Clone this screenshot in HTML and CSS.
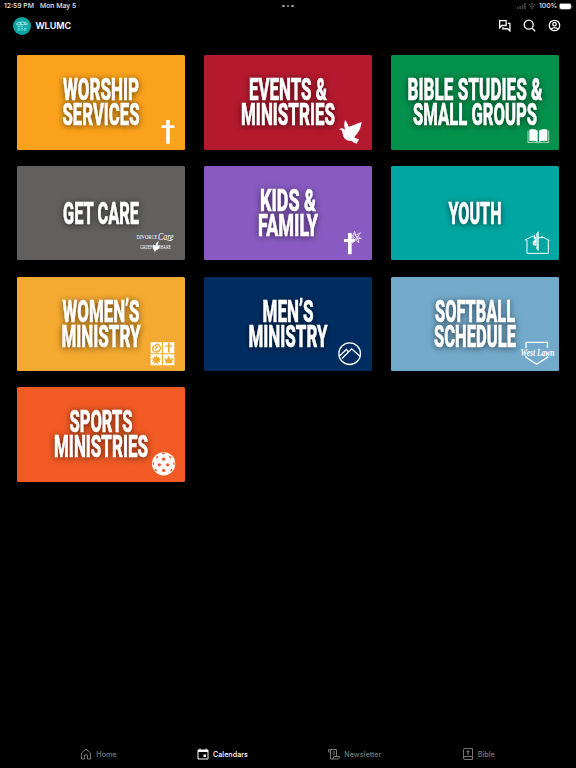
FILE: index.html
```html
<!DOCTYPE html>
<html lang="en">
<head>
<meta charset="utf-8">
<title>WLUMC</title>
<link rel="stylesheet" href="styles.css">
</head>
<body>
<div class="status">
  <span class="time">12:59 PM</span><span class="date">Mon May 5</span>
  <span class="dots"><i></i><i></i><i></i></span>
  <svg class="signal" width="9" height="6" viewBox="0 0 9 6"><path d="M0 4h1.6v2H0zM2.4 3H4v3H2.4zM4.8 1.6h1.6V6H4.800zM7.200 0h1.600v6H7.200z"/></svg>
  <svg class="wifi" width="8" height="6" viewBox="0 0 8 6"><path d="M.5 2.300q3.500-3 7 0M1.800 3.800q2.200-1.900 4.400 0"/><circle cx="4" cy="5.100" r=".5"/></svg>
  <span class="percent">100%</span>
  <svg class="battery" width="14" height="7" viewBox="0 0 14 7"><rect x=".3" y=".3" width="12" height="6.200" rx="1.800" class="case"/><rect x=".7" y=".8" width="11.200" height="5.200" rx="1.400"/><path d="M12.900 2.400q.8 1 0 2z"/></svg>
</div>
<header class="header">
  <svg class="avatar" width="18" height="18" viewBox="0 0 54 54"><circle cx="27" cy="27" r="27" fill="#08a5a2"/><path d="M10 20q8-5 17-5t17 5M10 23h34M20 18l6 3M34 16l3 6M24 26l6 4M14 28h8" fill="none" stroke="#e5ffff" stroke-width="2"/><path d="M14 34h6M23 34h6M33 34h8M13 39h9M25 39h5M32 39h8" stroke="#bff" stroke-width="2"/></svg>
  <h1>WLUMC</h1>
  <svg class="tool" width="13" height="13" viewBox="0 0 24 24"><path d="M3 3h12v9H7l-4 4zM18 8h4v14l-4-4H9v-3"/></svg>
  <svg class="tool" width="13" height="13" viewBox="0 0 24 24"><circle cx="10.500" cy="10.500" r="8.300"/><path d="m17 17 5.500 5.500"/></svg>
  <svg class="tool" width="13" height="13" viewBox="0 0 24 24"><circle cx="12" cy="12" r="9.600"/><circle cx="12" cy="9.500" r="3.200"/><path d="M5.500 18.500q6.500-5 13 0"/></svg>
</header>
<main class="grid">
  <svg class="card worship" viewBox="0 0 168 94.500">
    <g class="title"><text x="84" y="45.300" textLength="76" lengthAdjust="spacingAndGlyphs">WORSHIP</text><text x="84" y="69.700" textLength="77" lengthAdjust="spacingAndGlyphs">SERVICES</text></g>
    <path class="fill" d="M149.200 65h3.600v5.200h4.700v2.900h-4.700v15.600h-3.600V73.100h-4.700v-2.900h4.700z"/>
  </svg>
  <svg class="card events" viewBox="0 0 168 94.500">
    <g class="title"><text x="84" y="45.300" textLength="78" lengthAdjust="spacingAndGlyphs">EVENTS &amp;</text><text x="84" y="69.700" textLength="94" lengthAdjust="spacingAndGlyphs">MINISTRIES</text></g>
    <path class="fill" transform="scale(.33333) translate(-24 -16)" d="M428 240q5-6 12-4l7 5q-5-15 0-31 8 9 11 21 14-4 39-14-3 23-14 35-7 7-8 12l14 5-7 13q-8-2-15-8-18 0-24-12-3-8-5-19-4-4-10-3z"/>
  </svg>
  <svg class="card studies" viewBox="0 0 168 94.500">
    <g class="title"><text x="84" y="45.300" textLength="135" lengthAdjust="spacingAndGlyphs">BIBLE STUDIES &amp;</text><text x="84" y="69.700" textLength="124" lengthAdjust="spacingAndGlyphs">SMALL GROUPS</text></g>
    <g transform="scale(.33333) translate(-22 -16)"><path class="fill" d="M437 240q14-5 25 3v34q-11-6-25-3zM466 243q11-8 25-3v34q-14-3-25 3z"/><path class="line" stroke-width="2" d="M433 243v36q18-3 31 0 13-3 31 0v-36"/></g>
  </svg>
  <svg class="card care" viewBox="0 0 168 94.500">
    <g class="title"><text x="84" y="57.600" textLength="76" lengthAdjust="spacingAndGlyphs">GET CARE</text></g>
    <g class="serif"><text x="119.500" y="72.600" font-size="5.500" textLength="21" lengthAdjust="spacingAndGlyphs">DIVORCE</text><text class="script" x="141" y="73.500" font-size="10.500" textLength="15.500" lengthAdjust="spacingAndGlyphs">Care</text><text x="123" y="82.500" font-size="5.500" textLength="12.500" lengthAdjust="spacingAndGlyphs">GRIEF</text><text x="141" y="82.500" font-size="5.500" textLength="13" lengthAdjust="spacingAndGlyphs">SHARE</text></g>
    <path class="fill" d="M136 79q2-1 2 2 1-5 4-6-2 3-1 5l2-1q-1 5-4 5l-1 2-1-2q-2-1-1-5zM149 74.500l7.500-1-3 1.500z"/>
  </svg>
  <svg class="card kids" viewBox="0 0 168 94.500">
    <g class="title"><text x="84" y="45" textLength="56" lengthAdjust="spacingAndGlyphs">KIDS &amp;</text><text x="84" y="69.500" textLength="60" lengthAdjust="spacingAndGlyphs">FAMILY</text></g>
    <g transform="scale(.33333) translate(-24 -18)"><path class="fill" d="M456 219h11v18h10v9h-10v37h-11v-37h-12v-9h12z"/><path class="line" stroke-width="2" d="m462 224 10 3 4-14 3 13 15-8-9 12 11 6-11-1 4 14-10-9-10 9 5-13-9-5 9-1 7 9 5-12M472 219l8 8 8 15"/></g>
  </svg>
  <svg class="card youth" viewBox="0 0 168 94.500">
    <g class="title"><text x="84" y="57.600" textLength="53" lengthAdjust="spacingAndGlyphs">YOUTH</text></g>
    <g transform="scale(.33333) translate(-22 -18)"><path class="line" stroke-width="3" d="m424 240 24-12m24 1 25 12M430 240v40h64v-40M461 228v37M453 233h25"/><path class="fill" d="M465 214v59q-11-6-5-17-14 3-13-8 0-6 8-9-7-3-6-10l5-7q-3 8 4 9-3-9 7-17z"/><path stroke="#00a6a1" stroke-width="1.500" fill="none" d="M461 226q-4 6-1 13v20M450 250q5 3 9-1"/></g>
  </svg>
  <svg class="card women" viewBox="0 0 168 94.500">
    <g class="title"><text x="84" y="45.300" textLength="77" lengthAdjust="spacingAndGlyphs">WOMEN’S</text><text x="84" y="69.700" textLength="79" lengthAdjust="spacingAndGlyphs">MINISTRY</text></g>
    <g transform="scale(.33333) translate(-20 -20.500)"><path class="fill" d="M421 216h34v33h-34zM458 216h34v33h-34zM421 252h34v33h-34zM458 252h34v33h-34z"/><g fill="#f4a930"><path d="M473 218h5v8h8v4h-8v17h-5v-17h-8v-4h8zM462 261l7 8 6-12 6 12 8-8-4 18h-19zM438 255l3 7 6-4-1 7 7 1-6 4 4 6-7-1-1 7-5-5-6 5v-7l-7 1 4-6-6-4 7-1-1-7 6 4z"/></g><path fill="none" stroke="#f4a930" stroke-width="4" d="M431 226q-9 12 0 18 13 5 19-7 1-11-8-15-8 1-7 6l6 3-8 7"/></g>
  </svg>
  <svg class="card men" viewBox="0 0 168 94.500">
    <g class="title"><text x="84" y="45.300" textLength="51" lengthAdjust="spacingAndGlyphs">MEN’S</text><text x="84" y="69.700" textLength="79" lengthAdjust="spacingAndGlyphs">MINISTRY</text></g>
    <g transform="scale(.33333) translate(-24 -20.500)" class="line"><circle cx="461" cy="250.500" r="32.500" stroke-width="4"/><path stroke-width="4" d="m430 258 21-20 8 8M438 265l29-29 25 22"/></g>
  </svg>
  <svg class="card softball" viewBox="0 0 168 94.500">
    <g class="title"><text x="84" y="45.300" textLength="80" lengthAdjust="spacingAndGlyphs">SOFTBALL</text><text x="84" y="69.700" textLength="82" lengthAdjust="spacingAndGlyphs">SCHEDULE</text></g>
    <path class="line" stroke-width="1.300" d="M135 71v-5.700h21.500V71M135 79v1.300l10.700 7 10.800-7V79"/>
    <g class="serif"><text class="script bold" x="129.500" y="78.500" font-size="9.500" textLength="34" lengthAdjust="spacingAndGlyphs">West Lawn</text></g>
  </svg>
  <svg class="card sports" viewBox="0 0 168 94.500">
    <g class="title"><text x="84" y="45.300" textLength="63" lengthAdjust="spacingAndGlyphs">SPORTS</text><text x="84" y="69.700" textLength="94" lengthAdjust="spacingAndGlyphs">MINISTRIES</text></g>
    <g transform="scale(.33333) translate(-20 -22.500)"><circle class="fill" cx="460" cy="253" r="35"/><g fill="#f15a24"><circle cx="460" cy="239" r="5"/><circle cx="447" cy="256" r="5"/><circle cx="472" cy="256" r="5"/><circle cx="460" cy="273" r="5"/><ellipse cx="459" cy="222" rx="5" ry="2"/><ellipse cx="440" cy="233" rx="4.500" ry="2.500" transform="rotate(-45 440 233)"/><ellipse cx="480" cy="233" rx="4.500" ry="2.500" transform="rotate(45 480 233)"/><ellipse cx="429" cy="252" rx="2" ry="5"/><ellipse cx="491" cy="252" rx="2" ry="5"/><ellipse cx="436" cy="272" rx="4.500" ry="2.500" transform="rotate(50 436 272)"/><ellipse cx="483" cy="272" rx="4.500" ry="2.500" transform="rotate(-50 483 272)"/></g></g>
  </svg>
</main>
<nav class="tabs">
  <a class="tab"><svg width="12" height="12" viewBox="0 0 24 24"><path d="M3 10 12 2l9 8v12h-6v-8H9v8H3z"/></svg>Home</a>
  <a class="tab active"><svg width="12" height="12" viewBox="0 0 24 24"><path d="M2 4h20v18H2zM2 7h20M6 1v4M18 1v4"/><path class="fill" stroke="none" d="M2 4h20v4H2zM13 13h5v5h-5z"/></svg>Calendars</a>
  <a class="tab"><svg width="12" height="12" viewBox="0 0 24 24"><path d="M5 8H1V3h16v14M5 3v19h16q2-1 2-5H11v3q0 2-3 2M9 8h5M9 12h5"/></svg>Newsletter</a>
  <a class="tab"><svg width="12" height="12" viewBox="0 0 24 24"><path d="M21 17V1H6Q3 1 3 4v16q0 3 3 3h15M3 20q0-3 3-3h15v6M12 4v10M8.500 7.500h7"/></svg>Bible</a>
</nav>
</body>
</html>
```
FILE: styles.css
```css
* { box-sizing: border-box; }
body {
  margin: 0;
  width: 576px;
  height: 768px;
  display: flex;
  flex-direction: column;
  overflow: hidden;
  background: #000;
  color: #fff;
  font-family: Inter, "Liberation Sans", sans-serif;
}
svg { display: block; flex: none; }
.status {
  height: 12px;
  padding: 0 3px 0 4px;
  display: flex;
  align-items: center;
  font-size: 6.800px;
  font-weight: 500;
  line-height: 12px;
  color: #e8e8e8;
  white-space: nowrap;
}
.time { width: 36px; }
.date { width: 242px; }
.dots { display: flex; gap: 2px; }
.dots i { width: 2.700px; height: 2.700px; border-radius: 50%; background: #999; }
.signal { margin-left: auto; fill: #444; }
.wifi { margin: 0 3px 0 2.500px; fill: #555; stroke: #555; }
.wifi path { fill: none; }
.percent { width: 18.500px; margin-right: 1.500px; }
.battery { fill: #fff; }
.battery .case { fill: none; stroke: #777; stroke-width: .6; }
.header {
  height: 43.300px;
  padding: 4.500px 15px 0 12.700px;
  display: flex;
  align-items: flex-start;
}
.header h1 {
  margin: 0 auto 0 4.700px;
  font-size: 9px;
  line-height: 18px;
  font-weight: 600;
}
.tool {
  margin: 2.500px 0 0 12px;
  fill: none;
  stroke: #fff;
  stroke-width: 2.400;
}
.grid {
  flex: 1;
  padding: 0 16.700px;
  display: grid;
  grid-template-columns: repeat(3, 168px);
  grid-auto-rows: 94.500px;
  column-gap: 19.300px;
  row-gap: 16.200px;
  align-content: start;
}
.card { width: 168px; height: 94.500px; border-radius: 1.500px; }
.worship { background: #faa21b; }
.events { background: #b5192e; }
.studies { background: #04914c; }
.care { background: #62605e; }
.kids { background: #895bc2; }
.youth { background: #00a6a1; }
.women { background: #f4a930; }
.men { background: #002d61; }
.softball { background: #73aacb; }
.sports { background: #f15a24; }
.title {
  font-family: Roboto, "Liberation Sans Narrow", sans-serif;
  font-size: 31.200px;
  font-weight: 800;
  fill: #fff;
  stroke: #fff;
  stroke-width: .6;
  text-anchor: middle;
  filter: drop-shadow(0 1px 3px rgba(0, 0, 0, .6));
}
.fill { fill: #fff; }
.line { fill: none; stroke: #fff; }
.serif { font-family: "Liberation Serif", serif; fill: #fff; }
.script { font-style: italic; }
.bold { font-weight: 700; }
.tabs {
  height: 28px;
  padding: 0 3px 0 2px;
  display: flex;
  align-items: center;
  justify-content: center;
}
.tab {
  display: flex;
  align-items: center;
  gap: 4px;
  font-size: 7.200px;
  font-weight: 500;
  color: #777;
}
.tab + .tab { margin-left: 80.400px; }
.tab svg { fill: none; stroke: currentColor; stroke-width: 2; }
.tab .fill { fill: currentColor; }
.tab.active { color: #fff; }
```
